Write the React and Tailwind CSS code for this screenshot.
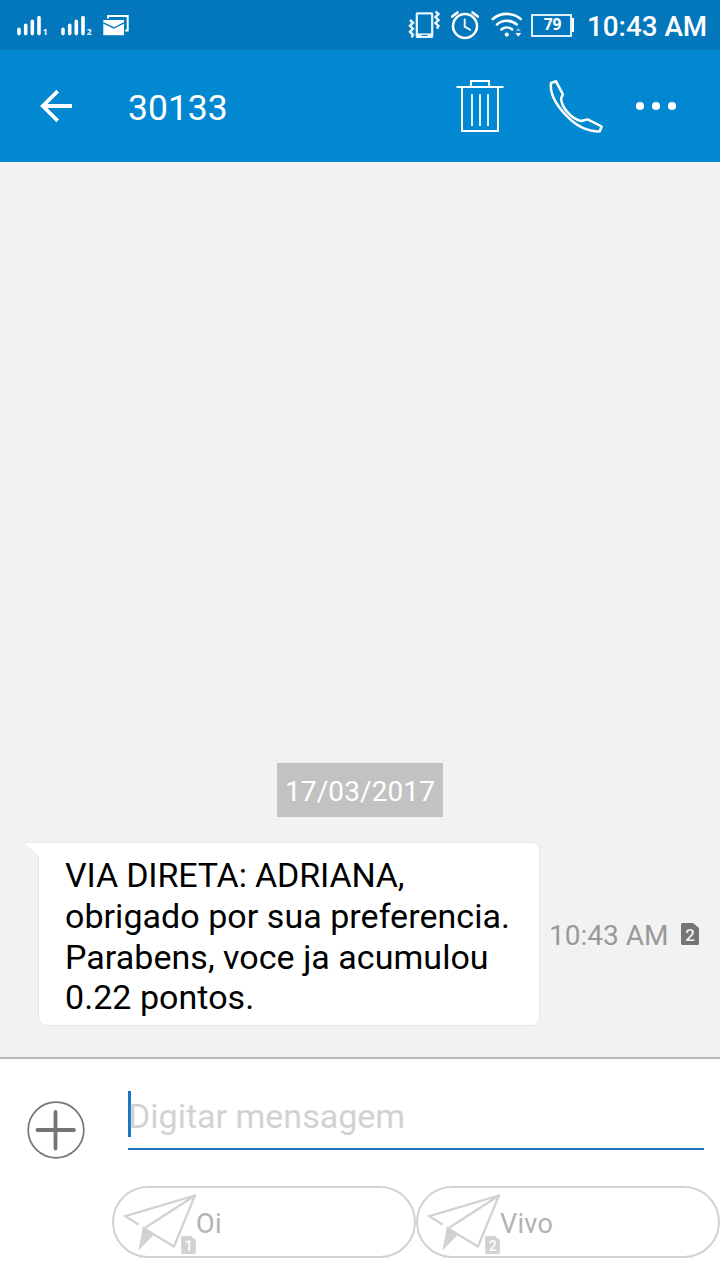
import React, { useState } from 'react';

const carriers = [
  { sim: 1, name: 'Oi' },
  { sim: 2, name: 'Vivo' },
];

const SignalIcon = ({ sim }) => (
  <svg className="w-8 h-6 shrink-0" viewBox="16 13 32 24">
    <path
      d="M19 29.4v4.2M25.7 25.2v8.4M32.3 21.4v12.2M39 17.5v16.1"
      stroke="#fff"
      strokeWidth="3.6"
      strokeLinecap="round"
    />
    <text x="42.8" y="35" fill="#fff" fontFamily="Open Sans, sans-serif" fontWeight="700" fontSize="8.5">{sim}</text>
  </svg>
);

const MailIcon = () => (
  <svg className="w-7 h-6 shrink-0" viewBox="102 13 28 24">
    <path d="M108 18.5V16h19.7v14.6h-2.5" fill="none" stroke="#fff" strokeWidth="2" />
    <path d="M103.3 20h20.7v15.2h-20.7z" fill="#fff" />
    <path d="M103.3 22.8l10.5 5.2 10.2-5.2" fill="none" stroke="#0277bb" strokeWidth="1.4" />
  </svg>
);

const VibrateIcon = () => (
  <svg className="w-9 h-8 shrink-0" viewBox="407 9 36 32" fill="none" stroke="#e9f7ff">
    <rect x="416.8" y="13.4" width="15.4" height="23.4" rx="0.5" strokeWidth="2.2" />
    <path d="M416 35.4h17" strokeWidth="4" />
    <path d="M421.5 35.4h6" stroke="#0277bb" strokeWidth="1" />
    <path d="M410 20l3 2.8-3 3 3 3-3 3 3 3-1.5 2.6M435.5 11.5l3 2.6-3 3 3 3-3 3 3 2.8-1.5 2.7" strokeWidth="2.4" />
  </svg>
);

const AlarmIcon = () => (
  <svg className="w-8 h-8 shrink-0" viewBox="449 9 32 32" fill="none" stroke="#fff" strokeLinecap="round">
    <circle cx="465" cy="26" r="12" strokeWidth="2.5" />
    <path d="M464.7 19.4v7.2l5.4 3.2" strokeWidth="1.9" strokeLinejoin="round" />
    <path d="M452.2 16.6l5.3-4.2M472.5 12.4l5.3 4.2" strokeWidth="2.6" />
  </svg>
);

const WifiIcon = () => (
  <svg className="w-8 h-8 shrink-0" viewBox="490 9 32 32" fill="none" stroke="#fff" strokeLinecap="round">
    <path d="M492.8 19c8-6.8 20-6.8 28 0" strokeWidth="2.6" />
    <path d="M497 24.4c5.8-4.8 14-4.8 19.7 0" strokeWidth="2.6" />
    <path d="M501.4 29.4c3.2-2.6 7.6-2.6 10.8 0" strokeWidth="2.6" />
    <circle cx="506.8" cy="34.6" r="2.1" fill="#fff" stroke="none" />
    <path d="M515.6 31l2.7-3.2 2.7 3.2z" fill="#73b5df" stroke="none" />
    <path d="M515.4 33l2.9 3.8 2.9-3.8z" fill="#fff" stroke="none" />
  </svg>
);

const Battery = ({ level }) => (
  <div className="flex items-center">
    <div className="flex h-[23px] w-[41px] items-center justify-center border-2 border-[#d9efff] pl-0.5 font-['Open_Sans',sans-serif] text-[15.5px] font-bold leading-none text-white">
      {level}
    </div>
    <div className="h-3.5 w-0.5 bg-white" />
  </div>
);

const StatusBar = () => (
  <div className="flex h-[50px] items-center bg-[#0277bb] pl-4 pr-[13px] text-white">
    <div className="flex items-center">
      <SignalIcon sim={1} />
      <div className="w-3" />
      <SignalIcon sim={2} />
      <div className="w-2.5" />
      <MailIcon />
    </div>
    <div className="ml-auto flex items-center">
      <VibrateIcon />
      <div className="w-1.5" />
      <AlarmIcon />
      <div className="w-[9px]" />
      <WifiIcon />
      <div className="w-[9px]" />
      <Battery level={79} />
      <span className="ml-[13px] w-[120px] whitespace-nowrap pt-[3px] text-[27.8px] font-medium leading-8">10:43 AM</span>
    </div>
  </div>
);

const BackIcon = () => (
  <svg className="w-9 h-9" viewBox="38 88 36 36" fill="none" stroke="#fff" strokeWidth="3.8">
    <path d="M72 106H43M57.7 91.2L42.8 106l14.9 14.8" />
  </svg>
);

const TrashIcon = () => (
  <svg className="w-12 h-14" viewBox="456 78 48 56" fill="none" stroke="#fff" strokeWidth="2">
    <path d="M456.5 87h47M471 87v-6h18v6M462 87v44h36V87" />
    <path d="M472 94v32M480 94v32M488 94v32" stroke="#d8fbff" />
  </svg>
);

const PhoneIcon = () => (
  <svg className="w-14 h-14" viewBox="548 78 56 56" fill="none" stroke="#fff" strokeWidth="2.5" strokeLinejoin="round">
    <path d="M551 83l5-1.700 6.900 13-1.800 4.300c.5 9.400 11 20.700 20.100 22.400l6.500-1.600 13.900 7.100-1.800 4.800c-9.500.7-21-3.700-30.100-12.400C557.500 107.200 549.500 94.500 551 83z" />
  </svg>
);

const MoreIcon = () => (
  <svg className="w-11 h-3" viewBox="634 100 44 12" fill="#fff">
    <circle cx="640" cy="106" r="4.1" />
    <circle cx="656" cy="106" r="4.1" />
    <circle cx="672" cy="106" r="4.1" />
  </svg>
);

const Header = () => (
  <header className="flex h-28 items-center bg-[#0288d1] pl-[38px] pr-[42px] text-white">
    <button><BackIcon /></button>
    <h1 className="ml-[54px] pt-[3px] text-[35.5px] font-normal leading-10">30133</h1>
    <div className="ml-auto flex items-center">
      <button><TrashIcon /></button>
      <button className="ml-11"><PhoneIcon /></button>
      <button className="ml-[30px]"><MoreIcon /></button>
    </div>
  </header>
);

const SimIcon = ({ sim, className, fill, ink }) => (
  <svg className={className} viewBox="0 0 18 22">
    <path d="M1.5 0H12l6 5v15.5a1.5 1.5 0 0 1-1.5 1.5h-15A1.5 1.5 0 0 1 0 20.5v-19A1.5 1.5 0 0 1 1.5 0z" fill={fill} />
    <text x="9.2" y="18" textAnchor="middle" fill={ink} fontFamily="Roboto, sans-serif" fontWeight="500" fontSize="17">{sim}</text>
  </svg>
);

const Message = () => (
  <div className="mt-[25px] flex items-center pl-[22px]">
    <div className="flex items-start">
      <svg className="relative left-px z-10 h-4 w-4" viewBox="0 0 16 16">
        <path d="M0 .5h16V15z" fill="#fff" />
        <path d="M16 .5H0l16 14.5" fill="none" stroke="#e9e9e9" />
      </svg>
      <div className="h-[184px] w-[502px] rounded-lg rounded-tl-none border border-[#e8e8e8] bg-white pl-[26px] pt-3 text-[34px] leading-[40.75px] tracking-[0.04px] text-black">
        <span className="tracking-[-0.15px]">VIA DIRETA: ADRIANA,</span><br />
        obrigado por sua preferencia.<br />
        Parabens, voce ja acumulou<br />
        0.22 pontos.
      </div>
    </div>
    <span className="ml-[9px] whitespace-nowrap pt-[3px] text-[28px] leading-8 text-[#999]">10:43 AM</span>
    <SimIcon sim={2} className="ml-[13px] h-[22px] w-[18px]" fill="#757575" ink="#f2f2f2" />
  </div>
);

const SendButton = ({ sim, name }) => (
  <button className="flex h-[72px] w-[304px] items-center rounded-full border-2 border-[#d2d2d2] pl-2 text-[27px] text-[#b2b2b2]">
    <span className="relative h-16 w-[74px]">
      <svg className="h-16 w-[74px]" viewBox="122 1190 74 64" fill="none" stroke="#d2d2d2" strokeWidth="2.3">
        <path d="M138.5 1224.5l-13.2-8.3 69.7-20.7-21 51-30-18 51-33" />
        <path d="M143.5 1227l-4.5 22.5 15-15.5z" fill="#d2d2d2" strokeWidth="1" />
      </svg>
      <SimIcon sim={sim} className="absolute bottom-0 right-0 h-[18px] w-[15px]" fill="#d2d2d2" ink="#fff" />
    </span>
    <span className="pt-1 tracking-[0.3px]">{name}</span>
  </button>
);

const Composer = () => {
  const [text, setText] = useState('');

  return (
    <div className="h-[223px] border-t-2 border-[#b8b8b8] bg-white">
      <div className="flex h-[100px] items-start pl-[27px] pr-4 pt-8">
        <button className="mt-2.5 h-[58px]">
          <svg className="w-[58px] h-[58px]" viewBox="0 0 58 58" fill="none" stroke="#757575">
            <circle cx="29" cy="29" r="27.8" strokeWidth="1.7" />
            <path d="M10.5 29h36.5M28.5 11v36.5" strokeWidth="3.8" strokeLinecap="round" />
          </svg>
        </button>
        <div className="ml-[43px] flex h-[59px] flex-1 items-start border-b-2 border-[#1f74c2]">
          <div className="h-[46px] w-[3px] bg-[#1f74c2]" />
          <input
            type="text"
            value={text}
            onChange={(e) => setText(e.target.value)}
            className="-ml-[3px] h-[51px] flex-1 text-[34px] outline-none placeholder:text-[#d2d2d2]"
            placeholder="Digitar mensagem"
          />
        </div>
      </div>
      <div className="flex pl-28 pt-[27px]">
        {carriers.map((c) => (
          <SendButton key={c.sim} sim={c.sim} name={c.name} />
        ))}
      </div>
    </div>
  );
};

const App = () => (
  <div className="flex h-[1280px] w-[720px] flex-col overflow-hidden bg-[#f2f2f2] font-[Roboto,sans-serif]">
    <StatusBar />
    <Header />
    <main className="flex flex-1 flex-col justify-end pb-[31px]">
      <div className="ml-[277px] flex h-[54px] w-[166px] items-center justify-center bg-[#c2c2c2] pt-1 text-[28px] tracking-[0.1px] text-white">
        17/03/2017
      </div>
      <Message />
    </main>
    <Composer />
  </div>
);

export default App;
